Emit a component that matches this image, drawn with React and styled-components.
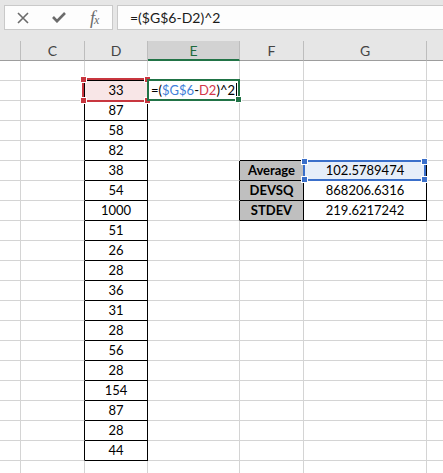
import React from 'react';
import styled, { createGlobalStyle, css } from 'styled-components';

const Global = createGlobalStyle`
  html, body { margin: 0; padding: 0; background: #fff; }
  body { font-family: Lato, "Liberation Sans", sans-serif; }
`;

const GRID = '#d4d4d4';
const BLACK = '#000';

const Sheet = styled.div`
  width: 443px;
  height: 473px;
  overflow: hidden;
  background: #fff;
`;

const FormulaArea = styled.div`
  height: 41px;
  box-sizing: border-box;
  background: #e6e6e6;
  display: flex;
  gap: 4px;
  padding: 5px 0 11px 4px;
`;

const ButtonBox = styled.div`
  width: 109px;
  box-sizing: border-box;
  background: #fdfdfd;
  border: 1px solid #c9c9c9;
  display: flex;
  align-items: center;
`;

const IconSlot = styled.div`
  width: 36px;
  height: 100%;
  display: flex;
  align-items: center;
  justify-content: center;
  color: #6b6b6b;
`;

const Fx = styled.span`
  font-family: "Liberation Serif", serif;
  font-style: italic;
  font-size: 18px;
  line-height: 1;
  color: #6b6b6b;
  letter-spacing: -1px;
  & small { font-size: 12px; }
`;

const InputBox = styled.div`
  flex: 1;
  box-sizing: border-box;
  background: #fdfdfd;
  border: 1px solid #c9c9c9;
  border-right: none;
  display: flex;
  align-items: center;
  padding-left: 12px;
  font-size: 14px;
  color: #1a1a1a;
`;

const HeaderRow = styled.div`
  display: flex;
  height: 20px;
  background: #e6e6e6;
`;

const HeaderCell = styled.div`
  flex: 0 0 ${p => p.$w}px;
  box-sizing: border-box;
  border-right: 1px solid #bdbdbd;
  border-bottom: 1px solid #9d9d9d;
  display: flex;
  align-items: center;
  justify-content: center;
  font-size: 14px;
  color: #444;
  ${p => p.$sel && css`
    background: #d2d2d2;
    border-bottom: 2px solid #217346;
    color: #1d6a3e;
  `}
`;

const Row = styled.div`
  display: flex;
  height: 20px;
`;

const Cell = styled.div`
  flex: 0 0 ${p => p.$w}px;
  box-sizing: border-box;
  border-right: 1px solid ${p => p.$rb || GRID};
  border-bottom: 1px solid ${p => p.$bb || GRID};
  background: ${p => p.$bg || '#fff'};
  font-size: 13px;
  line-height: 19px;
  color: #000;
  text-align: ${p => p.$align || 'center'};
  font-weight: ${p => (p.$bold ? 700 : 400)};
  white-space: nowrap;
  position: ${p => (p.$rel ? 'relative' : 'static')};
`;

const Handle = styled.span`
  position: absolute;
  width: 5px;
  height: 5px;
  background: ${p => p.$c};
  border: 1px solid #fff;
  ${p => p.$pos}
`;

const RefBox = styled.div`
  position: absolute;
  top: -3px;
  left: -3px;
  right: -2px;
  bottom: -2px;
  border: 2px solid ${p => p.$c};
  z-index: 2;
  pointer-events: none;
`;

const EditBox = styled.div`
  position: absolute;
  top: -2px;
  left: -1px;
  right: -1px;
  bottom: -1px;
  border: 2px solid #217346;
  z-index: 3;
  background: #fff;
  text-align: left;
  padding-left: 2px;
  line-height: 18px;
  display: flex;
  align-items: center;
`;

const Blue = styled.span` color: #3f7fd9; `;
const Red = styled.span` color: #d2354a; `;

const Caret = styled.span`
  display: inline-block;
  width: 1px;
  height: 15px;
  background: #000;
  margin-left: 1px;
`;

const cols = [
  { k: 'B', w: 21 },
  { k: 'C', w: 64 },
  { k: 'D', w: 63 },
  { k: 'E', w: 92 },
  { k: 'F', w: 64 },
  { k: 'G', w: 123 },
  { k: 'H', w: 60 },
];

const dVals = [33, 87, 58, 82, 38, 54, 1000, 51, 26, 28, 36, 31, 28, 56, 28, 154, 87, 28, 44];
const table = {
  6: ['Average', '102.5789474'],
  7: ['DEVSQ', '868206.6316'],
  8: ['STDEV', '219.6217242'],
};

function cellProps(k, r) {
  const p = {};
  const inD = r >= 2 && r <= 20;
  if (k === 'C' && inD) p.$rb = BLACK;
  if (k === 'D' && (inD || r === 1)) {
    p.$bb = BLACK;
    if (inD) p.$rb = BLACK;
  }
  const inT = r >= 6 && r <= 8;
  if (k === 'E' && inT) p.$rb = BLACK;
  if ((k === 'F' || k === 'G') && (inT || r === 5)) {
    p.$bb = BLACK;
    if (inT) p.$rb = BLACK;
  }
  return p;
}

const corners = [
  'top:-4px;left:-4px;',
  'top:-4px;right:-4px;',
  'bottom:-4px;left:-4px;',
  'bottom:-4px;right:-4px;',
];

function CellContent({ k, r }) {
  if (k === 'D' && r >= 2 && r <= 20) {
    if (r === 2) {
      return (
        <>
          {dVals[0]}
          <RefBox $c="#c8363f">
            {corners.map((c, i) => <Handle key={i} $c="#c8363f" $pos={c} />)}
          </RefBox>
        </>
      );
    }
    return dVals[r - 2];
  }
  if (k === 'E' && r === 2) {
    return (
      <EditBox>
        =(<Blue>$G$6</Blue>-<Red>D2</Red>)^2<Caret />
        <Handle $c="#217346" $pos="bottom:-4px;right:-4px;" />
      </EditBox>
    );
  }
  if (table[r] && k === 'F') return table[r][0];
  if (table[r] && k === 'G') {
    if (r === 6) {
      return (
        <>
          {table[r][1]}
          <RefBox $c="#3a6fca" style={{ top: -1, left: -1, right: 0, bottom: -1 }}>
            {corners.map((c, i) => <Handle key={i} $c="#3a6fca" $pos={c} />)}
          </RefBox>
        </>
      );
    }
    return table[r][1];
  }
  return null;
}

export default function App() {
  const rows = Array.from({ length: 21 }, (_, i) => i + 1);
  return (
    <>
      <Global />
      <Sheet>
        <FormulaArea>
          <ButtonBox>
            <IconSlot>
              <svg width="12" height="12" viewBox="0 0 12 12">
                <path d="M1 1 L11 11 M11 1 L1 11" stroke="#6b6b6b" strokeWidth="1.6" fill="none" />
              </svg>
            </IconSlot>
            <IconSlot>
              <svg width="14" height="11" viewBox="0 0 14 11">
                <path d="M1 5 L5 9.2 L13 1" stroke="#6b6b6b" strokeWidth="2.6" fill="none" />
              </svg>
            </IconSlot>
            <IconSlot>
              <Fx>f<small>x</small></Fx>
            </IconSlot>
          </ButtonBox>
          <InputBox>=($G$6-D2)^2</InputBox>
        </FormulaArea>
        <HeaderRow>
          {cols.map(c => (
            <HeaderCell key={c.k} $w={c.w} $sel={c.k === 'E'}>
              {c.k === 'B' || c.k === 'H' ? '' : c.k}
            </HeaderCell>
          ))}
        </HeaderRow>
        {rows.map(r => (
          <Row key={r}>
            {cols.map(c => {
              const p = cellProps(c.k, r);
              const isF = c.k === 'F' && table[r];
              const rel = (c.k === 'D' && r === 2) || (c.k === 'E' && r === 2) || (c.k === 'G' && r === 6);
              return (
                <Cell
                  key={c.k}
                  $w={c.w}
                  {...p}
                  $bg={isF ? '#bfbfbf' : c.k === 'D' && r === 2 ? '#f8e6e7' : c.k === 'G' && r === 6 ? '#e6eef9' : undefined}
                  $bold={!!isF}
                  $rel={rel}
                >
                  <CellContent k={c.k} r={r} />
                </Cell>
              );
            })}
          </Row>
        ))}
      </Sheet>
    </>
  );
}
